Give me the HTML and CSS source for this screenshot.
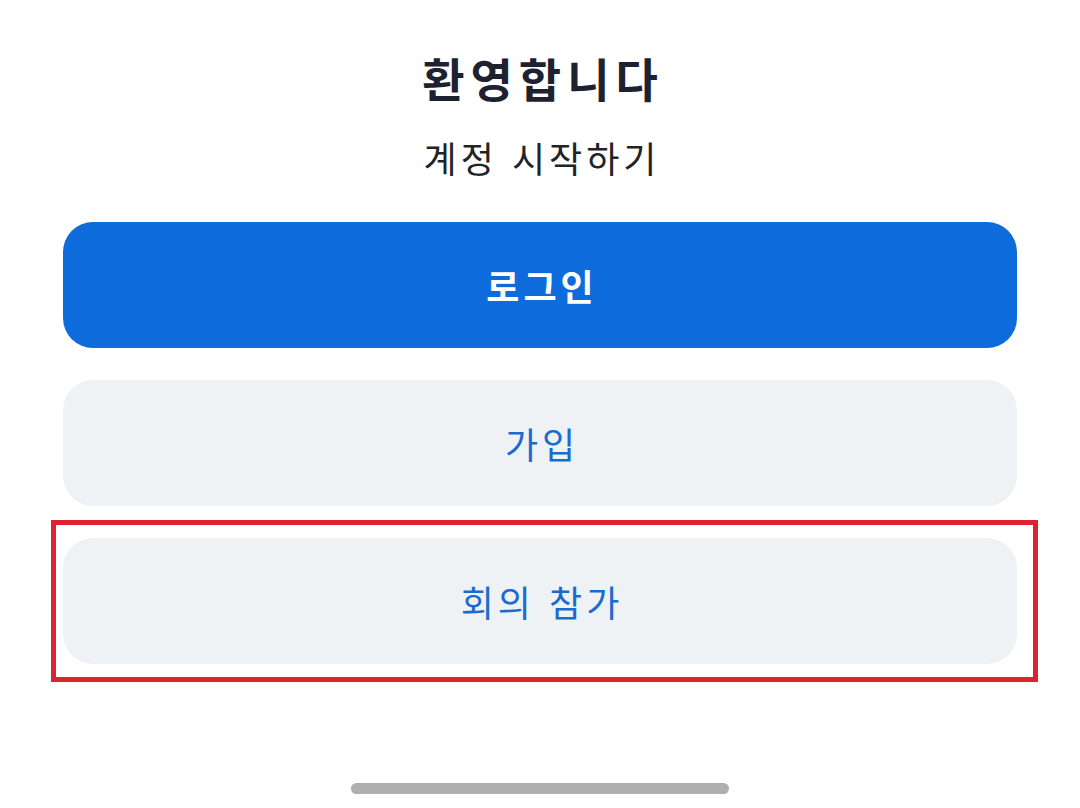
FILE: index.html
```html
<!DOCTYPE html>
<html lang="ko">
<head>
<meta charset="utf-8">
<link rel="stylesheet" href="styles.css">
</head>
<body>
<div class="screen">
  <div class="content">
    <h1 class="title">환영합니다</h1>
    <p class="subtitle">계정 시작하기</p>
    <div class="actions">
      <button class="btn btn-primary">로그인</button>
      <button class="btn btn-secondary">가입</button>
      <div class="highlight">
        <button class="btn btn-secondary">회의 참가</button>
      </div>
    </div>
  </div>
  <div class="home-indicator"></div>
</div>
</body>
</html>
```

FILE: styles.css
```css
html, body {
  margin: 0;
  padding: 0;
  background: #ffffff;
}
.screen {
  width: 1080px;
  height: 808px;
  display: flex;
  flex-direction: column;
  align-items: center;
  font-family: "Noto Sans CJK KR", "Noto Sans", sans-serif;
}
.content {
  width: 954px;
  display: flex;
  flex-direction: column;
  align-items: center;
  padding-top: 45px;
}
.title {
  margin: 0;
  font-size: 46px;
  font-weight: 700;
  line-height: 64px;
  letter-spacing: 6px;
  text-indent: 6px;
  color: #1e2230;
}
.subtitle {
  margin: 22px 0 0;
  font-size: 36px;
  font-weight: 400;
  line-height: 52px;
  letter-spacing: 4px;
  text-indent: 4px;
  color: #222326;
}
.actions {
  width: 100%;
  margin-top: 39px;
  display: flex;
  flex-direction: column;
  gap: 32px;
}
.btn {
  width: 100%;
  height: 126px;
  border: none;
  border-radius: 30px;
  font-family: inherit;
  font-size: 36px;
  letter-spacing: 4px;
  padding: 0 0 0 4px;
  display: flex;
  align-items: center;
  justify-content: center;
}
.btn-primary {
  background: #0e6bdc;
  color: #ffffff;
  font-weight: 700;
}
.btn-secondary {
  background: #eff2f5;
  color: #1a6bd0;
  font-weight: 400;
}
.highlight {
  position: relative;
}
.highlight::after {
  content: "";
  position: absolute;
  left: -12px;
  right: -21px;
  top: -18px;
  bottom: -18px;
  border: 5px solid #dc2430;
  pointer-events: none;
}
.home-indicator {
  margin-top: auto;
  margin-bottom: 14px;
  width: 378px;
  height: 11px;
  border-radius: 6px;
  background: #afafaf;
}
```
